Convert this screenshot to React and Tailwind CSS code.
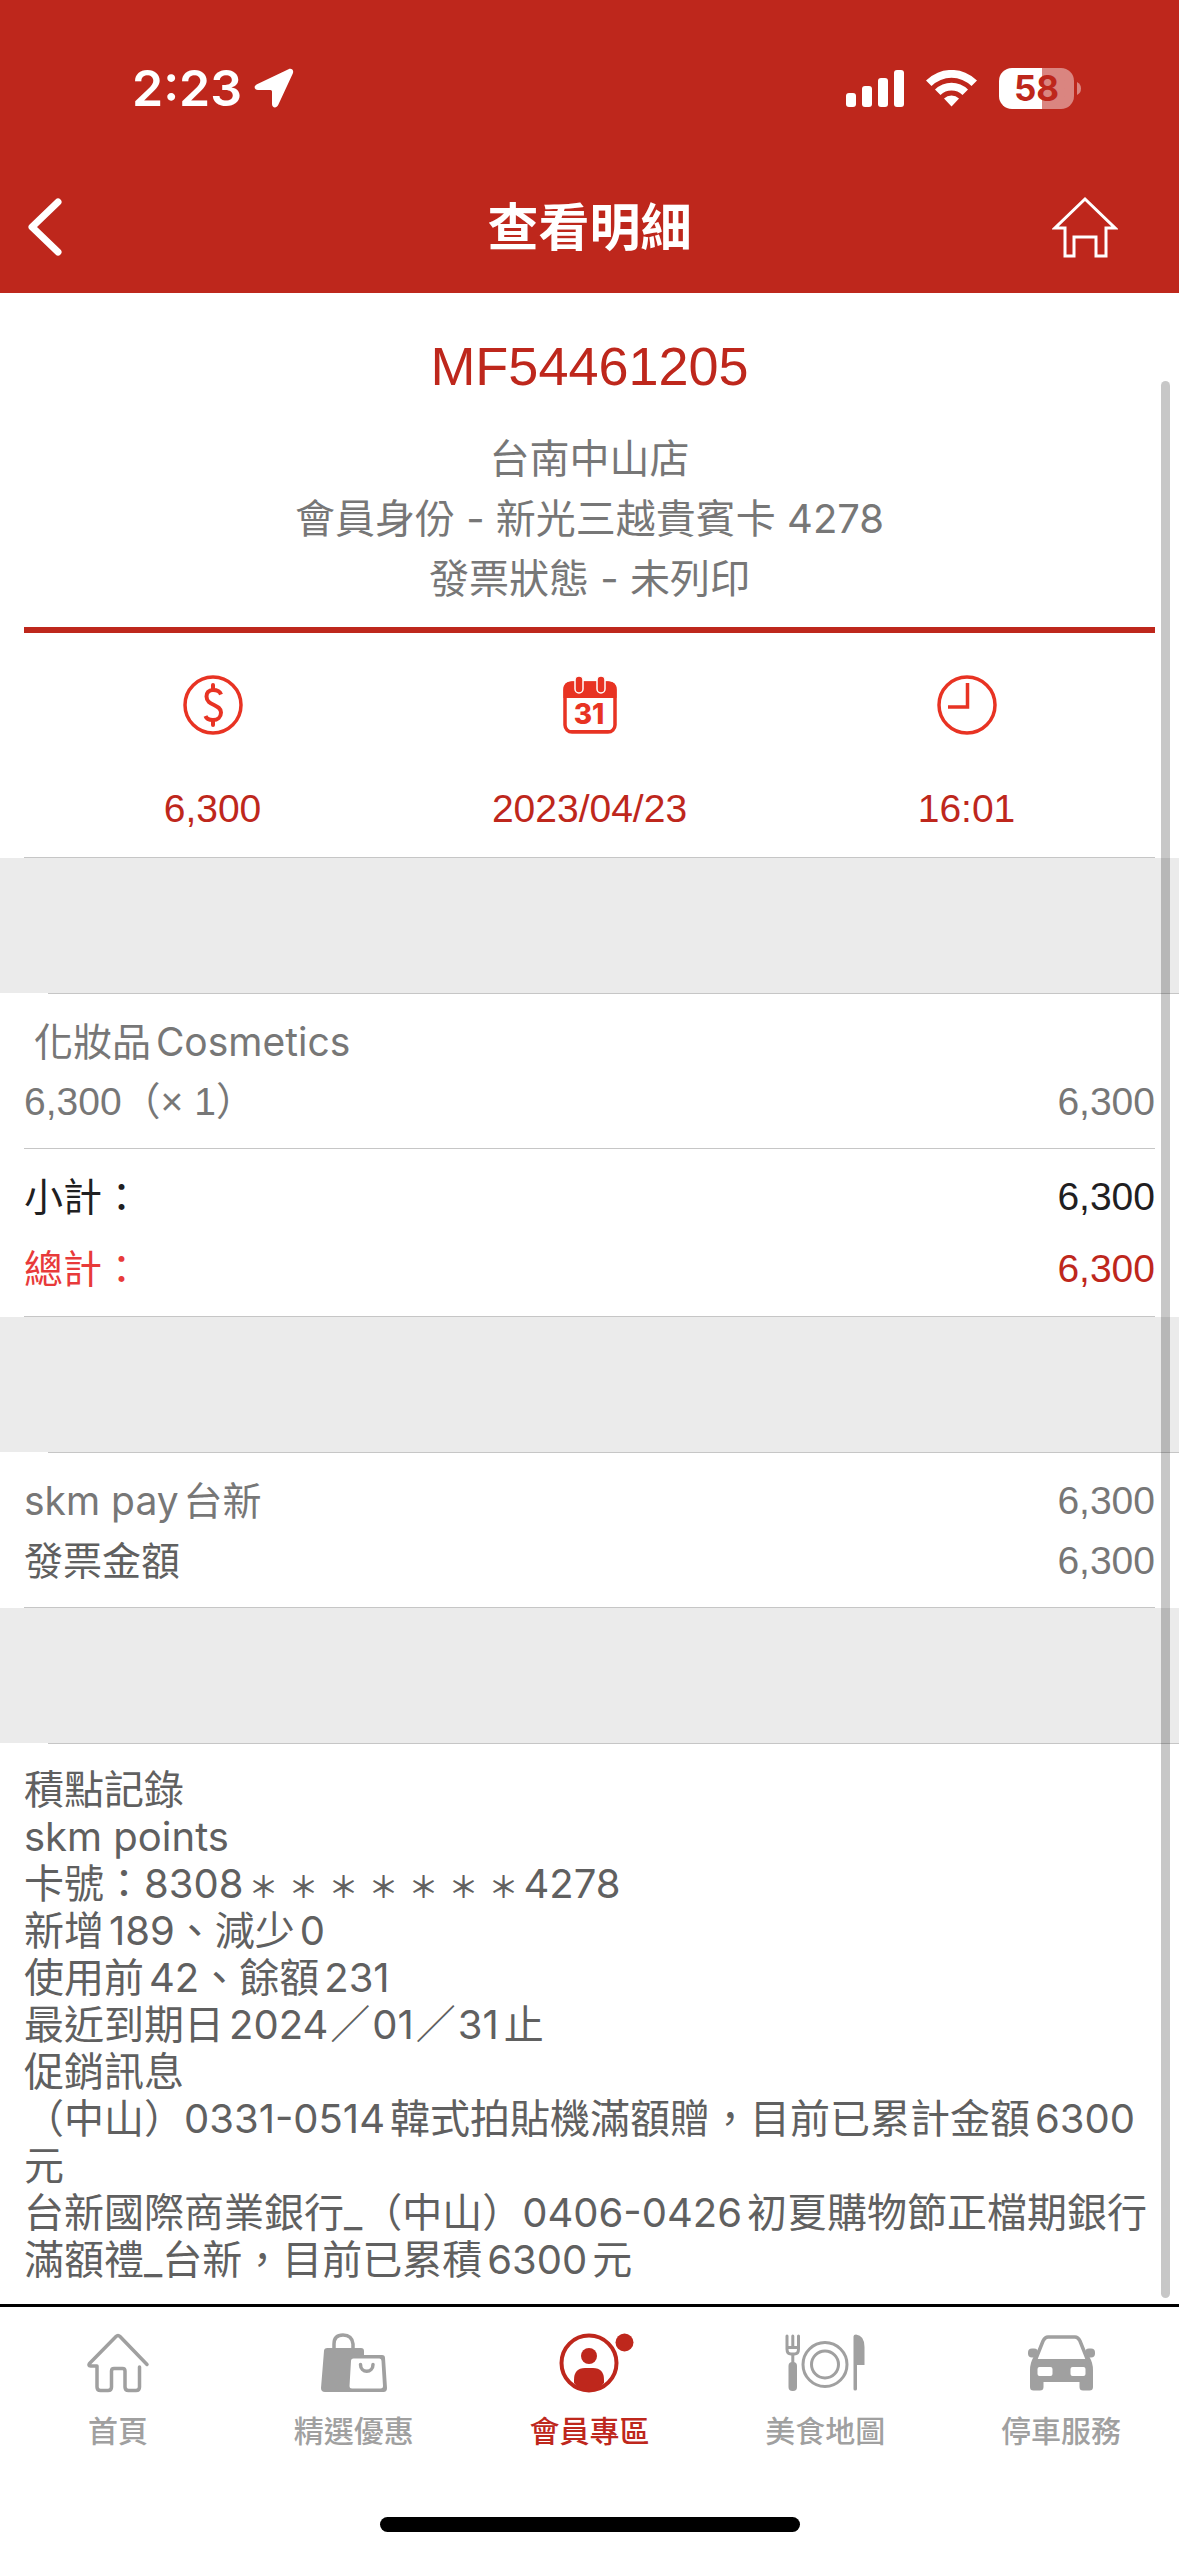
import React from "react";

const Rule = () => <div className="mx-6 h-px bg-[#c6c6c6]" />;

const Band = () => (
  <>
    <div className="h-[135px] bg-[#ebebeb]" />
    <div className="ml-12 h-px bg-[#c6c6c6]" />
  </>
);

const Amount = ({ children, className = "" }) => (
  <span className={"font-[family-name:'Liberation_Sans','Noto_Sans_CJK_TC',sans-serif] " + className}>{children}</span>
);

function StatusBar() {
  return (
    <div className="flex h-[161px] items-center justify-between pt-[15px] pr-[98px] pl-[132px]">
      <div className="flex items-center gap-3">
        <span className="text-[50px] leading-none font-semibold">2:23</span>
        <svg width="40" height="40" viewBox="0 0 40 40" fill="#fff">
          <path d="M34.5 1.2 3 16.2C-.8 18 .4 22 4 22H16.5Q18 22 18 23.5V36C18 40 22.5 40.600 24.2 37L38.800 5.500C40.200 2.300 37.600-.2 34.500 1.200Z" />
        </svg>
      </div>
      <div className="flex items-center">
        <svg className="mr-[22px]" width="58" height="37" viewBox="0 0 58 37" fill="#fff">
          <rect x="0" y="23" width="10" height="14" rx="3" />
          <rect x="16" y="16" width="10" height="21" rx="3" />
          <rect x="32" y="8" width="10" height="29" rx="3" />
          <rect x="48" y="0" width="10" height="37" rx="3" />
        </svg>
        <svg className="mr-[22px]" width="51" height="37" viewBox="0 0 51 37" fill="#fff">
          <path d="M0 10.500A36 36 0 0 1 51 10.500L45.500 16A28.500 28.500 0 0 0 5.500 16Z" />
          <path d="M9 19.500A23.500 23.500 0 0 1 42 19.500L36.500 25A16 16 0 0 0 14.500 25Z" />
          <path d="M18 28.500A11 11 0 0 1 33 28.500L25.500 36.500Z" />
        </svg>
        <div className="flex h-[41px] w-[75px] items-center justify-center rounded-[13px] bg-linear-to-r from-white from-57% to-[#da8580] to-57% text-[35px] leading-none font-bold text-[#be271c]">
          58
        </div>
        <svg className="ml-[3px]" width="4" height="13" viewBox="0 0 4 13" fill="#da8580">
          <path d="M0 0Q4 2 4 6.500T0 13Z" />
        </svg>
      </div>
    </div>
  );
}

function NavBar() {
  return (
    <div className="grid h-[132px] grid-cols-3 items-center px-[27px]">
      <button aria-label="返回" className="justify-self-start">
        <svg width="36" height="60" viewBox="0 0 36 60" fill="none" stroke="#fff" strokeWidth="7" strokeLinecap="round" strokeLinejoin="round">
          <path d="M31 5 5 30 31 55" />
        </svg>
      </button>
      <h1 className="justify-self-center text-[51px] leading-none font-bold whitespace-nowrap">查看明細</h1>
      <button aria-label="首頁" className="mr-[34px] justify-self-end">
        <svg width="66" height="62" viewBox="0 0 66 62" fill="none" stroke="#fff" strokeWidth="3">
          <path d="M33 3 3 32H13V60H22V41H44V60H54V32H63Z" />
        </svg>
      </button>
    </div>
  );
}

const DollarIcon = () => (
  <svg width="60" height="60" viewBox="0 0 60 60" fill="none" stroke="#e83323" strokeWidth="3.500">
    <circle cx="30" cy="30" r="28" />
    <path d="M30 10V15M30 45V50" strokeWidth="4" strokeLinecap="round" />
    <path d="M38 19.500C37 16.500 34 15 30 15C25.500 15 23.500 18 23.500 21.500C23.500 31 38 29 38 37.500C38 42 34.500 45 30 45C26 45 23.500 44 22.500 41" strokeWidth="4" />
  </svg>
);

const CalendarIcon = () => (
  <svg width="60" height="60" viewBox="0 0 60 60">
    <rect x="5" y="8" width="50" height="49" rx="7" fill="none" stroke="#e83323" strokeWidth="3.500" />
    <path d="M3.500 23V14Q3.500 6.500 11 6.500H49Q56.500 6.500 56.500 14V23Z" fill="#e83323" />
    <path d="M7 55H53V56Q51 58 48 58H12Q9 58 7 56Z" fill="#e83323" />
    <rect x="15" y="1" width="8" height="17" rx="4" fill="#e83323" stroke="#fff" strokeWidth="1.500" />
    <rect x="37" y="1" width="8" height="17" rx="4" fill="#e83323" stroke="#fff" strokeWidth="1.500" />
    <text x="29" y="49" textAnchor="middle" fontFamily="Inter, sans-serif" fontWeight="800" fontSize="28" fill="#e83323">31</text>
  </svg>
);

const ClockIcon = () => (
  <svg width="60" height="60" viewBox="0 0 60 60" fill="none" stroke="#e83323" strokeWidth="3.500">
    <circle cx="30" cy="30" r="28" />
    <path d="M30.500 8V32H11" strokeWidth="3.500" />
  </svg>
);

const facts = [
  { icon: <DollarIcon />, text: "6,300" },
  { icon: <CalendarIcon />, text: "2023/04/23" },
  { icon: <ClockIcon />, text: "16:01" },
];

const HomeTab = () => (
  <svg width="64" height="60" viewBox="0 0 64 60" fill="none" stroke="#a0a0a0" strokeWidth="3.500" strokeLinecap="round" strokeLinejoin="round">
    <path d="M61 31.500 34 3.500Q32 1.500 30 3.500L3.500 30.500Q2 33 4.500 33H11V54Q11 57.500 14.500 57.500H22Q25.500 57.500 25.500 54V38Q25.500 35.500 28 35.500H36.500Q39 35.500 39 38V54Q39 57.500 42.500 57.500H50Q53.500 57.500 53.500 54V34" />
  </svg>
);

const BagTab = () => (
  <svg width="66" height="60" viewBox="0 0 66 60">
    <path d="M13 17V11Q13 2 22 2T32 11V17" fill="none" stroke="#a0a0a0" strokeWidth="3.500" />
    <path d="M6.500 15H40Q43 15 43 18V22H61Q64 22 64 25L66 55Q66 59 62.500 59H4Q0 59 0 55L3 18Q3 15 6.500 15Z" fill="#a0a0a0" />
    <path d="M32.500 25.500H58.500Q60.500 25.500 60.500 28L62 53Q62 55.500 59.500 55.500H31Q28.500 55.500 28.500 53L30 28Q30 25.500 32.500 25.500Z" fill="#fff" />
    <path d="M39.500 31.500C39.500 40.500 52 40.500 52 31.500" fill="none" stroke="#a0a0a0" strokeWidth="3.500" strokeLinecap="round" />
  </svg>
);

const MemberTab = () => (
  <svg width="60" height="60" viewBox="0 0 60 60" className="overflow-visible">
    <circle cx="30" cy="30" r="27.500" fill="none" stroke="#be271c" strokeWidth="4" />
    <circle cx="30" cy="23" r="8" fill="#be271c" />
    <path d="M15 50V47Q15 35 26 35H34Q45 35 45 47V50Q39 58 30 58T15 50Z" fill="#be271c" />
    <circle cx="65.500" cy="9.500" r="9" fill="#be271c" />
  </svg>
);

const FoodTab = () => (
  <svg width="80" height="60" viewBox="0 0 80 60" fill="none" stroke="#a0a0a0" strokeWidth="3">
    <path d="M2 3V16Q2 21 6 21H9.500Q13.500 21 13.500 16V3M2 14.500H13.500M7.800 3V14.500M7.800 21V30" strokeLinecap="round" />
    <rect x="3.500" y="29" width="8.500" height="29" rx="4" fill="#a0a0a0" stroke="none" />
    <circle cx="40" cy="31.500" r="22" />
    <circle cx="40" cy="31.500" r="13.500" />
    <path d="M68.500 3.500Q68.500 1.500 71 1.500Q79.500 2.500 79.500 14V32H72V56Q72 57.500 70.200 57.500T68.500 56Z" fill="#a0a0a0" stroke="none" />
  </svg>
);

const CarTab = () => (
  <svg width="67" height="60" viewBox="0 0 67 60">
    <path d="M7 28 15 8Q17 4 20 4H47Q50 4 52 8L60 28" fill="none" stroke="#a0a0a0" strokeWidth="3.500" />
    <rect x="0" y="15.500" width="10" height="9" rx="4" fill="#a0a0a0" />
    <rect x="57" y="15.500" width="10" height="9" rx="4" fill="#a0a0a0" />
    <path fillRule="evenodd" fill="#a0a0a0" d="M7 22.500 5.500 24Q2 30 2 37V54Q2 57.500 5.500 57.500H12Q15.500 57.500 15.500 54V49H51.500V54Q51.500 57.500 55 57.500H61.500Q65 57.500 65 54V37Q65 30 61.500 24L60 22.500 58 26H9ZM11.500 34H22.500Q24.500 34 24.500 36V41Q24.500 43 22.500 43H11.500Q9.500 43 9.500 41V36Q9.500 34 11.500 34ZM44.500 34H55.500Q57.500 34 57.500 36V41Q57.500 43 55.500 43H44.500Q42.500 43 42.500 41V36Q42.500 34 44.500 34Z" />
  </svg>
);

const tabs = [
  { label: "首頁", icon: <HomeTab /> },
  { label: "精選優惠", icon: <BagTab /> },
  { label: "會員專區", icon: <MemberTab />, active: true },
  { label: "美食地圖", icon: <FoodTab /> },
  { label: "停車服務", icon: <CarTab /> },
];

const Masked = ({ text }) =>
  Array.from(text, (c, i) => (
    <span key={i} className="inline-block w-10 text-center text-[30px] leading-none font-medium">{c}</span>
  ));

const Slash = () => <span className="mx-[2px]">／</span>;

const points = [
  "積點記錄",
  "skm points",
  <>卡號：8308<Masked text="＊＊＊＊＊＊＊" />4278</>,
  "新增189、減少0",
  "使用前42、餘額231",
  <>最近到期日2024<Slash />01<Slash />31止</>,
  "促銷訊息",
  "（中山）0331-0514韓式拍貼機滿額贈，目前已累計金額6300元",
  "台新國際商業銀行_（中山）0406-0426初夏購物節正檔期銀行滿額禮_台新，目前已累積6300元",
];

export default function App() {
  return (
    <div className="flex min-h-screen flex-col bg-white font-[family-name:Inter,'Noto_Sans_CJK_TC',sans-serif] text-[39px] text-[#777] [text-autospace:normal]" lang="zh-Hant">
      <header className="bg-[#be271c] text-white">
        <StatusBar />
        <NavBar />
      </header>

      <main className="relative grow">
        <section className="px-6 text-center">
          <h2 className="pt-10 font-[family-name:'Liberation_Sans',sans-serif] text-[54px] leading-[66px] text-[#be271c]">MF54461205</h2>
          <div className="mt-[30px] pb-[18px] text-[40px] leading-[60px]">
            <p>台南中山店</p>
            <p>會員身份 - 新光三越貴賓卡 4278</p>
            <p>發票狀態 - 未列印</p>
          </div>
          <div className="h-[6px] bg-[#be271c]" />
          <ul className="grid grid-cols-3 pt-[42px] pb-[18px]">
            {facts.map((f) => (
              <li key={f.text} className="flex flex-col items-center gap-11 text-[#be271c]">
                {f.icon}
                <Amount className="leading-[60px]">{f.text}</Amount>
              </li>
            ))}
          </ul>
        </section>
        <Rule />
        <Band />

        <section className="px-6 pt-[18px] pb-4 leading-[60px]">
          <p className="pl-[10px]">化妝品Cosmetics</p>
          <div className="flex justify-between">
            <Amount>6,300（× 1）</Amount>
            <Amount>6,300</Amount>
          </div>
        </section>
        <Rule />
        <section className="px-6 pt-3 pb-[11px] leading-[72px]">
          <div className="flex justify-between text-[#1f2022]">
            <span>小計：</span>
            <Amount>6,300</Amount>
          </div>
          <div className="flex justify-between text-[#e83a3a]">
            <span>總計：</span>
            <Amount className="text-[#be271c]">6,300</Amount>
          </div>
        </section>
        <Rule />
        <Band />

        <section className="px-6 pt-[18px] pb-4 leading-[60px]">
          <div className="flex justify-between">
            <span>skm pay台新</span>
            <Amount>6,300</Amount>
          </div>
          <div className="flex justify-between">
            <span className="text-[#606060]">發票金額</span>
            <Amount>6,300</Amount>
          </div>
        </section>
        <Rule />
        <Band />

        <section className="px-6 pt-[22px] pb-4 text-[40px] leading-[47px] text-[#606060]">
          {points.map((line, i) => (
            <p key={i}>{line}</p>
          ))}
        </section>

        <div className="absolute top-[88px] right-[9px] bottom-[6px] w-[9px] rounded-full bg-black/22" />
      </main>

      <nav className="border-t-[3px] border-black">
        <ul className="grid grid-cols-5 pt-[26px]">
          {tabs.map((t) => (
            <li key={t.label}>
              <button className={"flex w-full flex-col items-center gap-[15px] text-[30px] leading-[46px] font-medium " + (t.active ? "text-[#be271c]" : "text-[#a0a0a0]")}>
                {t.icon}
                {t.label}
              </button>
            </li>
          ))}
        </ul>
        <div className="mx-auto mt-[63px] mb-6 h-[15px] w-[420px] rounded-full bg-black" />
      </nav>
    </div>
  );
}
